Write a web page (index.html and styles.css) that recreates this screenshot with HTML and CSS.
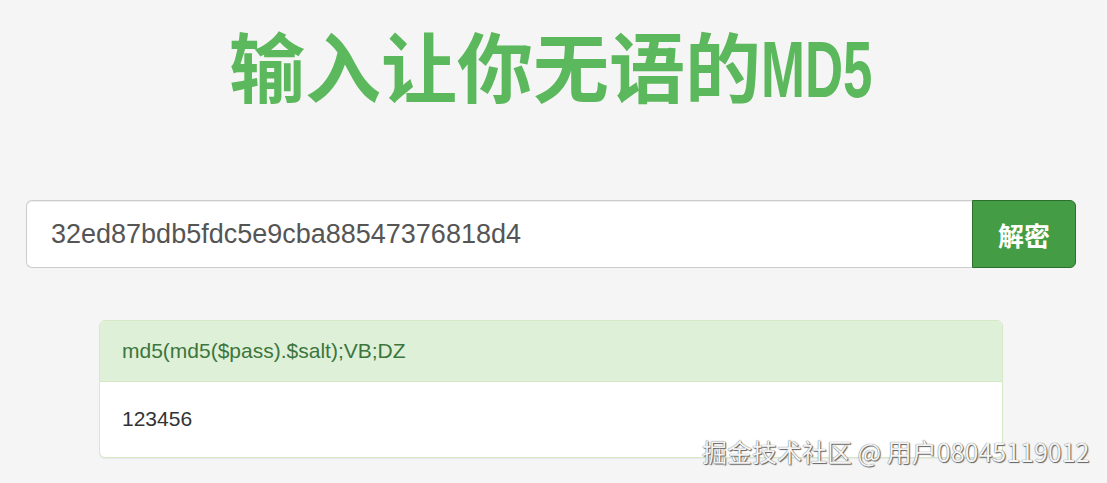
FILE: index.html
```html
<!DOCTYPE html>
<html lang="zh-CN">
<head>
    <meta charset="UTF-8">
    <meta name="viewport" content="width=device-width, initial-scale=1.0">
    <title>输入让你无语的MD5</title>
    <link rel="stylesheet" href="styles.css">
</head>
<body>
    <div class="page">
        <!-- Title -->
        <h1 class="page-title">输入让你无语的<span class="title-latin">MD5</span></h1>

        <!-- Search -->
        <form class="search-group">
            <input type="text" class="search-input" value="32ed87bdb5fdc5e9cba88547376818d4">
            <button type="submit" class="search-btn">解密</button>
        </form>

        <!-- Result -->
        <div class="result-panel">
            <div class="result-heading">md5(md5($pass).$salt);VB;DZ</div>
            <div class="result-body">123456</div>
        </div>
    </div>

    <div class="watermark">掘金技术社区 @ 用户08045119012</div>
</body>
</html>
```

FILE: styles.css
```css
/* ----- Color Variables ----- */
:root {
    --page-background: #f5f5f5;
    --success-color: #5cb85c;
    --success-dark: #449d44;
    --success-border: #2d6e2d;
    --panel-heading: #dff0d8;
    --panel-text: #3c763d;
    --panel-border: #d6e9c6;
    --text-color: #333333;
}

/* ----- Global Reset ----- */
* {
    margin: 0;
    padding: 0;
    box-sizing: border-box;
}

body {
    background: var(--page-background);
    font-family: "Liberation Sans", Arial, "Noto Sans CJK SC", sans-serif;
    color: var(--text-color);
    position: relative;
    height: 483px;
    overflow: hidden;
}

.page {
    width: 1050px;
    margin-left: 26px;
}

/* ----- Title ----- */
.page-title {
    margin-top: 26px;
    height: 76px;
    text-align: center;
    font-family: "Noto Sans CJK SC", sans-serif;
    font-size: 76px;
    line-height: 76px;
    font-weight: 700;
    color: var(--success-color);
    white-space: nowrap;
}

.title-latin {
    display: inline-block;
    width: 112px;
    font-family: "Liberation Sans", Arial, sans-serif;
    font-size: 80px;
    line-height: 60px;
    text-align: left;
    transform: scaleX(0.66);
    transform-origin: left center;
}

/* ----- Search Bar ----- */
.search-group {
    display: flex;
    margin-top: 98px;
    height: 68px;
}

.search-input {
    flex: 1;
    height: 100%;
    padding: 0 24px;
    border: 1px solid #cccccc;
    border-right: none;
    border-radius: 6px 0 0 6px;
    background: #ffffff;
    box-shadow: inset 0 1px 1px rgba(0, 0, 0, 0.075);
    font-family: "Liberation Sans", Arial, sans-serif;
    font-size: 27px;
    color: #555555;
    outline: none;
}

.search-btn {
    width: 104px;
    height: 100%;
    background: var(--success-dark);
    border: 1px solid var(--success-border);
    border-radius: 0 6px 6px 0;
    color: #ffffff;
    font-family: "Noto Sans CJK SC", sans-serif;
    font-size: 26px;
    font-weight: 700;
    cursor: pointer;
}

/* ----- Result Panel ----- */
.result-panel {
    margin: 52px 73px 0;
    background: #ffffff;
    border: 1px solid var(--panel-border);
    border-radius: 6px;
    box-shadow: 0 1px 1px rgba(0, 0, 0, 0.05);
    overflow: hidden;
    font-size: 21px;
    line-height: 30px;
}

.result-heading {
    padding: 15px 22px;
    background: var(--panel-heading);
    border-bottom: 1px solid var(--panel-border);
    color: var(--panel-text);
}

.result-body {
    padding: 22px 22px 23px;
    color: var(--text-color);
}

/* ----- Watermark ----- */
.watermark {
    position: absolute;
    top: 434px;
    left: 702px;
    font-family: "Noto Sans CJK SC", sans-serif;
    font-size: 25px;
    line-height: 34px;
    color: #f4f4f4;
    text-shadow: 0 0 1px #444444, 1px 1px 1px #666666;
    white-space: nowrap;
}
```
